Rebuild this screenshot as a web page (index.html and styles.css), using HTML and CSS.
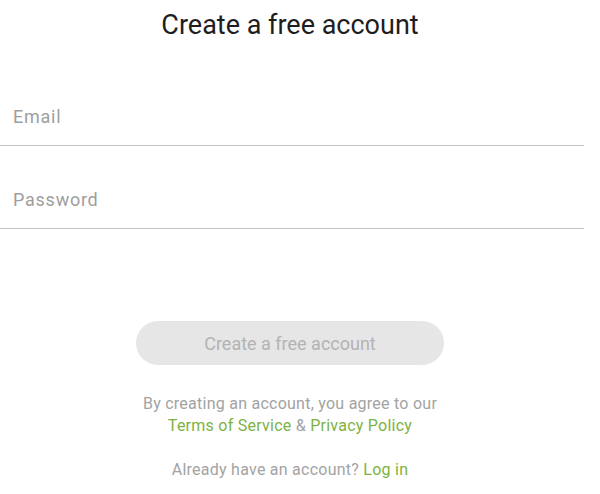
FILE: index.html
```html
<!DOCTYPE html>
<html lang="en">
<head>
<meta charset="utf-8">
<title>Create a free account</title>
<link rel="stylesheet" href="styles.css">
</head>
<body>
<main class="signup">
  <h1 class="title">Create a free account</h1>
  <form class="form">
    <div class="field"><span class="label">Email</span></div>
    <div class="field"><span class="label">Password</span></div>
    <button class="submit" type="button" disabled>Create a free account</button>
    <p class="terms">By creating an account, you agree to our<br><a class="link" href="#">Terms of Service</a> &amp; <a class="link" href="#">Privacy Policy</a></p>
    <p class="login">Already have an account? <a class="link" href="#">Log in</a></p>
  </form>
</main>
</body>
</html>
```
FILE: styles.css
```css
html, body {
  margin: 0;
  padding: 0;
  background: #ffffff;
}
body {
  font-family: Roboto, "Noto Sans", "Liberation Sans", sans-serif;
}
.signup {
  width: 584px;
}
.title {
  margin: 0 4px 0 0;
  padding-top: 9px;
  font-size: 27px;
  line-height: 32px;
  font-weight: 400;
  color: #1e1e1e;
  text-align: center;
}
.form {
  margin: 22px 0 0;
  display: flex;
  flex-direction: column;
}
.field {
  padding: 44px 13px 17px;
  line-height: 20px;
  border-bottom: 1px solid #c4c4c4;
}
.label {
  font-size: 18px;
  letter-spacing: 0.75px;
  color: #9e9e9e;
}
.submit {
  align-self: center;
  margin: 92px 4px 0 0;
  width: 308px;
  height: 44px;
  border: none;
  border-radius: 22px;
  background: #e6e6e6;
  color: #b3b3b3;
  font-family: inherit;
  font-size: 18px;
  padding: 0;
}
.terms, .login {
  margin: 0 4px 0 0;
  text-align: center;
  font-size: 16px;
  line-height: 22px;
  letter-spacing: 0.25px;
  color: #a3a3a3;
}
.terms {
  margin-top: 28px;
}
.login {
  margin-top: 22px;
}
.link {
  color: #7cb342;
  text-decoration: none;
}
```
